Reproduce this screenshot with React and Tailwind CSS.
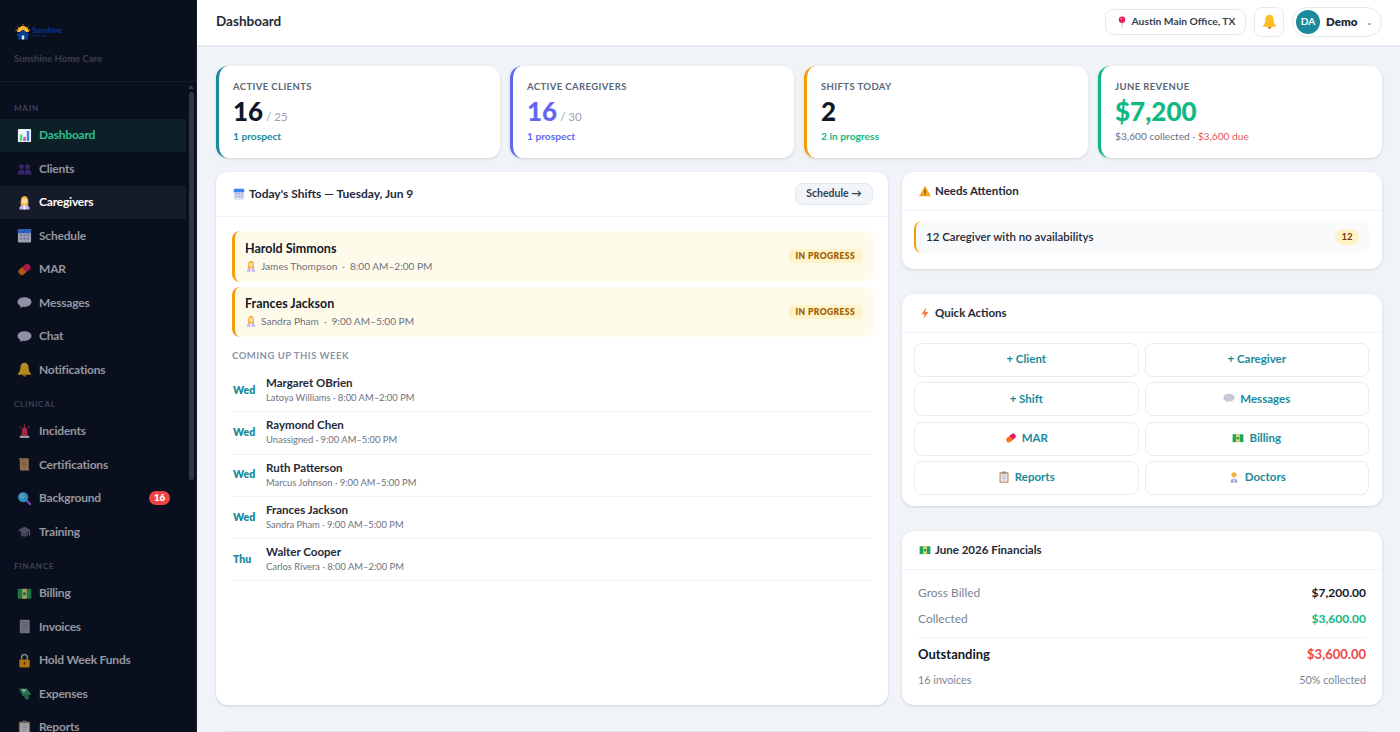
import React from "react";

const I = ({ children, className = "w-3.5 h-3.5" }) => (
  <svg viewBox="0 0 16 16" className={`${className} shrink-0`}>{children}</svg>
);

const Chart = (p) => (
  <I {...p}>
    <rect x="1" y="1" width="14" height="14" rx="1" fill="#f1f5f9" />
    <rect x="3" y="7" width="2.6" height="7" fill="#4ade80" />
    <rect x="6.7" y="9.5" width="2.6" height="4.5" fill="#ec4899" />
    <rect x="10.4" y="3" width="2.6" height="11" fill="#3b82f6" />
  </I>
);
const Users = (p) => (
  <I {...p}>
    <g fill="#46308a">
      <circle cx="4.8" cy="6" r="2.6" />
      <circle cx="11.200" cy="6" r="2.600" />
      <path d="M.5 14.500c0-3.500 1.500-5.500 4.300-5.500s3 2 3 5.500zM8.200 14.500c0-3.500 .2-5.500 3-5.500s4.300 2 4.300 5.500z" />
    </g>
  </I>
);
const Person = (p) => (
  <I {...p}>
    <path d="M2.500 15.500c0-3.800 2-5.500 5.500-5.500s5.500 1.700 5.500 5.500z" fill="#c4b5fd" />
    <path d="M4 10.500c-.5-5.500 .5-9.500 4-9.500s4.500 4 4 9.500l-2 1H6z" fill="#f5b342" />
    <circle cx="8" cy="6.500" r="2.800" fill="#fcd9a8" />
    <rect x="7" y="11" width="2" height="4.500" fill="#f1f5f9" />
  </I>
);
const Calendar = (p) => (
  <I {...p}>
    <rect x="1" y="1" width="14" height="14.500" rx="1.500" fill="#dcdff2" />
    <path d="M1 5.500V2.500A1.500 1.500 0 0 1 2.500 1h11A1.500 1.500 0 0 1 15 2.500v3z" fill="#3b82f6" />
    <g fill="#9a9cc4">
      <rect x="3.200" y="7" width="2.200" height="1.800" />
      <rect x="6.900" y="7" width="2.200" height="1.800" />
      <rect x="10.600" y="7" width="2.200" height="1.800" />
      <rect x="3.200" y="10.500" width="2.200" height="1.800" />
      <rect x="6.900" y="10.500" width="2.200" height="1.800" />
      <rect x="10.600" y="10.500" width="2.200" height="1.800" />
    </g>
  </I>
);
const Pill = (p) => (
  <I {...p}>
    <g transform="rotate(-40 8 8)">
      <path d="M8 4.400H4.400a3.600 3.600 0 0 0 0 7.200H8z" fill="#f97316" />
      <path d="M8 4.400h3.600a3.600 3.600 0 0 1 0 7.200H8z" fill="#ec1c5b" />
    </g>
  </I>
);
const Bubble = ({ fill = "#c9c6dc", ...p }) => (
  <I {...p}>
    <ellipse cx="8" cy="7.500" rx="7.500" ry="5.200" fill={fill} />
    <path d="M4 10.500l-.5 3.500 4-2.500z" fill={fill} />
  </I>
);
const Bell = (p) => (
  <I {...p}>
    <path d="M8 .8c-3 0-4.500 2.700-4.500 5.700 0 3.200-1.200 5-2.500 6v1.200h14v-1.200c-1.300-1-2.500-2.800-2.500-6C12.500 3.500 11 .8 8 .8z" fill="#fbbf24" />
    <path d="M6 13.700a2 2 0 0 0 4 0z" fill="#d97706" />
  </I>
);
const Siren = (p) => (
  <I {...p}>
    <path d="M4.500 12.500l1-6.500a2.500 2.500 0 0 1 5 0l1 6.500z" fill="#ef2d56" />
    <rect x="3" y="12.500" width="10" height="2.500" rx=".5" fill="#d8d4e8" />
    <path d="M8 .5v2.500M2.800 2.500l1.700 2M13.200 2.500l-1.700 2" stroke="#ef4444" strokeWidth="1" />
  </I>
);
const Scroll = (p) => (
  <I {...p}>
    <path d="M3 1.500h9.500v11a2 2 0 0 0 2 2H5a2 2 0 0 1-2-2z" fill="#c79a66" />
    <rect x="2" y="1" width="10" height="2" rx="1" fill="#a9794a" />
    <path d="M5 5.500h5M5 7.500h5M5 9.500h5" stroke="#8d6238" strokeWidth=".7" />
  </I>
);
const Search = (p) => (
  <I {...p}>
    <path d="M9.500 9.500l4.500 4.500" stroke="#a855f7" strokeWidth="2.400" strokeLinecap="round" />
    <circle cx="6.500" cy="6.500" r="5.500" fill="#38bdf8" />
    <circle cx="5.500" cy="5.500" r="2.800" fill="#7dd3fc" />
  </I>
);
const Cap = (p) => (
  <I {...p}>
    <path d="M4 8v4c1 2 7 2 8 0V8z" fill="#5a5570" />
    <path d="M8 3l7 3.500L8 10 1 6.500z" fill="#6b6580" />
    <path d="M13.500 7.500v5" stroke="#b08a4a" strokeWidth="1" />
  </I>
);
const Money = (p) => (
  <I {...p}>
    <rect x=".8" y="3" width="14.400" height="10.500" fill="#22a55b" />
    <rect x="5.500" y="3" width="5" height="10.500" fill="#e4d77a" />
    <circle cx="8" cy="8.200" r="1.800" fill="#22a55b" />
  </I>
);
const Ledger = (p) => (
  <I {...p}>
    <rect x="3" y=".8" width="10.500" height="14.400" rx=".8" fill="#9a9aa8" />
    <path d="M5 4h6.500M5 6.500h6.500M5 9h6.500M5 11.500h6.500" stroke="#6b6b78" strokeWidth=".8" />
  </I>
);
const Lock = (p) => (
  <I {...p}>
    <path d="M5 7V4.500a3 3 0 0 1 6 0V7" fill="none" stroke="#b8b8c4" strokeWidth="1.600" />
    <rect x="2.500" y="7" width="11" height="8.500" rx="1" fill="#f59e0b" />
    <rect x="7.200" y="9.500" width="1.600" height="3" fill="#78350f" />
  </I>
);
const Wings = (p) => (
  <I {...p}>
    <path d="M1 5l8-3 6 5-8 4z" fill="#2fa35e" transform="rotate(18 8 8)" />
    <path d="M5 3l5 1-3 3z" fill="#e5e7eb" />
    <path d="M7 11l5-3 1 5-3 2z" fill="#2f7d50" />
  </I>
);
const Clipboard = (p) => (
  <I {...p}>
    <rect x="2" y="1.800" width="12" height="13.800" rx="1" fill="#c08a5a" />
    <rect x="3.500" y="3.500" width="9" height="10.800" fill="#eceaf2" />
    <rect x="5.500" y=".8" width="5" height="2.700" rx=".5" fill="#8d8a9a" />
    <path d="M5.500 6h5M5.500 8h5M5.500 10h5M5.500 12h3" stroke="#9a97a8" strokeWidth=".7" />
  </I>
);
const Warn = (p) => (
  <I {...p}>
    <path d="M8 1L16 15H0z" fill="#f5a623" />
    <rect x="7.300" y="6" width="1.400" height="5" fill="#5b3a0a" />
    <rect x="7.300" y="12" width="1.400" height="1.400" fill="#5b3a0a" />
  </I>
);
const Bolt = (p) => (
  <I {...p}>
    <path d="M9.500.5L3.500 9.500h4L6 15.800 12.500 6.500h-4z" fill="#f97343" />
  </I>
);
const PinIcon = (p) => (
  <I {...p}>
    <path d="M8 9v6.500" stroke="#9ca3af" strokeWidth="1" />
    <circle cx="8" cy="5" r="4.300" fill="#ec1c5b" />
    <circle cx="6.800" cy="3.800" r="1.100" fill="#f9a8c0" />
  </I>
);
const Doc = (p) => (
  <I {...p}>
    <path d="M3.500 15.500c0-3.800 1.800-5.500 4.500-5.500s4.500 1.700 4.500 5.500z" fill="#a5a1d6" />
    <circle cx="8" cy="5" r="3.500" fill="#f5b342" />
    <rect x="7.200" y="10" width="1.600" height="5.500" fill="#eef" />
  </I>
);

const sections = [
  {
    label: "MAIN",
    items: [
      ["Dashboard", Chart, "active"],
      ["Clients", Users],
      ["Caregivers", Person, "hover"],
      ["Schedule", Calendar],
      ["MAR", Pill],
      ["Messages", Bubble],
      ["Chat", Bubble],
      ["Notifications", Bell],
    ],
  },
  {
    label: "CLINICAL",
    items: [
      ["Incidents", Siren],
      ["Certifications", Scroll],
      ["Background", Search, null, "16"],
      ["Training", Cap],
    ],
  },
  {
    label: "FINANCE",
    items: [
      ["Billing", Money],
      ["Invoices", Ledger],
      ["Hold Week Funds", Lock],
      ["Expenses", Wings],
      ["Reports", Clipboard],
    ],
  },
];

function NavItem({ label, Icon, state, badge }) {
  const tone =
    state === "active"
      ? "bg-[#0d2027] text-[#2fc191]"
      : state === "hover"
        ? "bg-[#161b2a] text-white"
        : "text-[#94979f]";
  const fade = state ? "" : "opacity-70";
  return (
    <div className={`flex h-[33.5px] items-center gap-[7px] pl-[17px] pr-4 text-[12px] font-bold tracking-[-0.2px] ${tone}`}>
      <span className={fade}>
        <Icon className="block w-[15px] h-[15px]" />
      </span>
      <span className="flex-1">{label}</span>
      {badge && (
        <span className="rounded-full bg-[#ef4444] px-[5px] py-px text-[9.5px] font-extrabold leading-[12px] tracking-normal text-white">
          {badge}
        </span>
      )}
    </div>
  );
}

function Sidebar() {
  return (
    <aside className="flex h-[732px] w-[197px] shrink-0 flex-col overflow-hidden border-r border-[#1a1d28] bg-[#0a0f1e]">
      <div className="h-[82px] shrink-0 border-b border-[#151a29] pl-[15px] pt-[24px]">
        <div className="flex h-[16px] items-center">
          <svg viewBox="0 0 16 16" className="h-[16px] w-[16px] shrink-0">
            <path d="M2 8a6 6 0 0 1 12 0z" fill="#fbb62c" />
            <path d="M8 .2v1.500M2.500 2.500l1 1M13.500 2.500l-1 1M.5 6h1.300M14.200 6h1.300" stroke="#fbb62c" strokeWidth=".8" />
            <path d="M8 5.500L1.500 10.500v1H3V15.500h10v-4h1.500v-1z" fill="#0a3d8f" />
            <rect x="6.800" y="11.500" width="2.400" height="4" fill="#e6eefc" />
          </svg>
          <div className="ml-px flex flex-col">
            <span className="text-[7.500px] font-bold leading-[7px] text-[#0b3a86]">Sunshine</span>
            <span className="text-[3px] leading-[4px] text-[#0b3a86]">Home Care</span>
          </div>
        </div>
        <p className="-ml-px mt-[12px] text-[9.5px] font-bold leading-[14px] text-[#3a3f4d]">Sunshine Home Care</p>
      </div>
      <div className="flex min-h-0 flex-1">
        <nav className="min-w-0 flex-1 overflow-hidden pt-[18px]">
          {sections.map((s, i) => (
            <div key={s.label} className={i ? "mt-[9.500px]" : ""}>
              <div className="flex h-[16px] items-center pl-[14px] text-[8px] font-bold tracking-[0.8px] text-[#3f4452]">
                {s.label}
              </div>
              <div className="mt-[2.500px]">
                {s.items.map(([label, Icon, state, badge]) => (
                  <NavItem key={label} label={label} Icon={Icon} state={state} badge={badge} />
                ))}
              </div>
            </div>
          ))}
        </nav>
        <div className="flex w-[10px] shrink-0 flex-col items-center pt-[3px]">
          <div className="h-0 w-0 border-x-[3px] border-b-[4px] border-x-transparent border-b-[#3a3d48]" />
          <div className="mt-[3px] h-[388px] w-[5px] rounded-full bg-[#33363f]" />
        </div>
      </div>
    </aside>
  );
}

function TopBar() {
  return (
    <header className="flex h-[47px] shrink-0 items-center justify-between border-b-2 border-[#e6eaf0] bg-white pb-[2px] pl-[19px] pr-[18px]">
      <h1 className="text-[13.5px] font-bold text-[#1f2937]">Dashboard</h1>
      <div className="flex items-center gap-[8px]">
        <div className="flex h-[26px] w-[141px] items-center justify-center gap-[4px] rounded-lg border border-[#e5e9f0] text-[10.300px] font-bold text-[#374151]">
          <PinIcon className="w-3 h-3" />
          Austin Main Office, TX
        </div>
        <div className="flex h-[30px] w-[30px] items-center justify-center rounded-lg border border-[#e5e9f0]">
          <Bell className="w-[15px] h-[15px]" />
        </div>
        <div className="flex h-[30px] w-[90px] items-center rounded-full border border-[#e5e9f0] pl-[3px]">
          <span className="flex h-[24px] w-[24px] items-center justify-center rounded-full bg-[#1a8a9a] text-[10px] font-bold text-white">
            DA
          </span>
          <span className="ml-[6px] text-[11.5px] font-extrabold text-[#1f2937]">Demo</span>
          <span className="ml-[9px] text-[8px] leading-[8px] text-[#6b7280]">⌄</span>
        </div>
      </div>
    </header>
  );
}

function Stat({ label, border, children, foot }) {
  return (
    <div className={`h-[92px] rounded-xl border-l-[3px] bg-white pl-[14px] pt-[15px] shadow-[0_1px_3px_rgba(15,23,42,0.14)] ${border}`}>
      <div className="text-[9.5px] font-bold leading-[12px] tracking-[0.4px] text-[#5b6778]">{label}</div>
      <div className="mt-[4px] flex h-[29px] items-baseline">{children}</div>
      <div className="mt-[3px] text-[10.2px] font-bold leading-[14px]">{foot}</div>
    </div>
  );
}

function Card({ className = "", children }) {
  return (
    <section className={`rounded-xl bg-white shadow-[0_1px_3px_rgba(15,23,42,0.14)] ${className}`}>{children}</section>
  );
}

function CardHead({ Icon, title, gap = "gap-[4px]" }) {
  return (
    <div className={`flex h-[39px] items-center border-b border-[#f1f3f7] pl-[17px] text-[11.5px] font-bold text-[#1f2937] ${gap}`}>
      <Icon className="w-3 h-3" />
      {title}
    </div>
  );
}

function ActiveShift({ name, who, time }) {
  return (
    <div className="flex h-[50.5px] items-center justify-between rounded-lg border-l-[3px] border-[#f59e0b] bg-[#fffbeb] pl-[10px] pr-[10px]">
      <div className="mb-[0.500px]">
        <div className="text-[12.5px] font-bold leading-[17px] text-[#111827]">{name}</div>
        <div className="mt-[2px] flex items-center text-[10.1px] leading-[14px] text-[#6b7280]">
          <Person className="w-3 h-3" />
          <span className="ml-[4px]">{who}</span>
          <span className="mx-[5px]">·</span>
          <span>{time}</span>
        </div>
      </div>
      <span className="rounded-full bg-[#fef3c7] px-[8px] py-[1px] text-[8.5px] font-extrabold leading-[12px] tracking-[0.4px] text-[#a16207]">
        IN PROGRESS
      </span>
    </div>
  );
}

const upcoming = [
  ["Wed", "Margaret OBrien", "Latoya Williams · 8:00 AM–2:00 PM"],
  ["Wed", "Raymond Chen", "Unassigned · 9:00 AM–5:00 PM"],
  ["Wed", "Ruth Patterson", "Marcus Johnson · 9:00 AM–5:00 PM"],
  ["Wed", "Frances Jackson", "Sandra Pham · 9:00 AM–5:00 PM"],
  ["Thu", "Walter Cooper", "Carlos Rivera · 8:00 AM–2:00 PM"],
];

const actions = [
  ["+ Client"],
  ["+ Caregiver"],
  ["+ Shift"],
  ["Messages", Bubble],
  ["MAR", Pill],
  ["Billing", Money],
  ["Reports", Clipboard],
  ["Doctors", Doc],
];

export default function App() {
  return (
    <div className="flex h-[732px] w-[1400px] overflow-hidden bg-[#f0f4f8] font-['Lato','Noto_Sans',sans-serif]">
      <Sidebar />
      <main className="flex min-w-0 flex-1 flex-col overflow-hidden">
        <TopBar />
        <div className="pl-[19px] pr-[18px] pt-[19px]">
          <div className="grid grid-cols-4 gap-[10px]">
            <Stat
              label="ACTIVE CLIENTS"
              border="border-[#1a8a9a]"
              foot={<span className="text-[#1a8a9a]">1 prospect</span>}
            >
              <span className="text-[26px] font-black leading-[29px] text-[#0f172a]">16</span>
              <span className="ml-[3px] text-[11.5px] text-[#9ca3af]">/ 25</span>
            </Stat>
            <Stat
              label="ACTIVE CAREGIVERS"
              border="border-[#6366f1]"
              foot={<span className="text-[#6366f1]">1 prospect</span>}
            >
              <span className="text-[26px] font-black leading-[29px] text-[#6366f1]">16</span>
              <span className="ml-[3px] text-[11.5px] text-[#9ca3af]">/ 30</span>
            </Stat>
            <Stat
              label="SHIFTS TODAY"
              border="border-[#f59e0b]"
              foot={<span className="text-[#10b981]">2 in progress</span>}
            >
              <span className="text-[26px] font-black leading-[29px] text-[#0f172a]">2</span>
            </Stat>
            <Stat
              label="JUNE REVENUE"
              border="border-[#10b981]"
              foot={
                <span className="font-normal text-[#6b7280]">
                  $3,600 collected · <span className="text-[#dc5a5a]">$3,600 due</span>
                </span>
              }
            >
              <span className="text-[26px] font-black leading-[29px] text-[#10b981]">$7,200</span>
            </Stat>
          </div>

          <div className="mt-[14px] grid grid-cols-[672px_480px] gap-[14px]">
            <Card className="h-[533px]">
              <div className="flex h-[45px] items-center justify-between border-b border-[#f1f3f7] pl-[17px] pr-[15px]">
                <div className="flex items-center gap-[4px] text-[12px] font-bold text-[#1f2937]">
                  <Calendar className="w-3 h-3" />
                  Today's Shifts — Tuesday, Jun 9
                </div>
                <div className="flex h-[22px] w-[78px] items-center justify-center rounded-lg border border-[#e2e8f0] bg-[#f1f5f9] text-[10.5px] font-bold text-[#374151]">
                  Schedule →
                </div>
              </div>
              <div className="pl-[16px] pr-[15px] pt-[14px]">
                <div className="flex flex-col gap-[5px]">
                  <ActiveShift name="Harold Simmons" who="James Thompson" time="8:00 AM–2:00 PM" />
                  <ActiveShift name="Frances Jackson" who="Sandra Pham" time="9:00 AM–5:00 PM" />
                </div>
                <div className="mt-[13px] text-[9.5px] font-bold leading-[12px] tracking-[0.5px] text-[#8a94a6]">
                  COMING UP THIS WEEK
                </div>
                <div className="mt-[8px]">
                  {upcoming.map(([d, n, s]) => (
                    <div key={n + d} className="flex h-[42.3px] items-center border-b border-[#f1f3f7] pl-px">
                      <span className="w-[33px] text-[10.5px] font-extrabold text-[#1a8a9a]">{d}</span>
                      <div className="mb-[2px]">
                        <div className="text-[11.5px] font-bold leading-[15px] text-[#1f2937]">{n}</div>
                        <div className="mt-[1px] text-[9.4px] leading-[13px] text-[#6b7280]">{s}</div>
                      </div>
                    </div>
                  ))}
                </div>
              </div>
            </Card>

            <div className="flex flex-col">
              <Card className="h-[97px]">
                <CardHead Icon={Warn} title="Needs Attention" />
                <div className="ml-[12px] mr-[13px] mt-[10px] flex h-[32px] items-center justify-between rounded-lg border-l-[2px] border-[#f59e0b] bg-[#f8fafc] pl-[10px] pr-[10px]">
                  <span className="text-[11.5px] font-semibold text-[#1f2937]">12 Caregiver with no availabilitys</span>
                  <span className="flex h-[16px] w-[24px] items-center justify-center rounded-full bg-[#fef3c7] text-[9.5px] font-bold text-[#78350f]">
                    12
                  </span>
                </div>
              </Card>

              <Card className="mt-[25px] h-[212px]">
                <CardHead Icon={Bolt} title="Quick Actions" gap="gap-[4px]" />
                <div className="ml-[12px] mr-[13px] mt-[10px] grid grid-cols-2 gap-x-[6px] gap-y-[5.300px]">
                  {actions.map(([label, Icon]) => (
                    <div
                      key={label}
                      className="flex h-[34px] items-center justify-center gap-[5px] rounded-lg border border-[#e8ecf2] pb-[2px] text-[11.5px] font-bold text-[#1a8a9a]"
                    >
                      {Icon && <Icon className="w-3 h-3" />}
                      {label}
                    </div>
                  ))}
                </div>
              </Card>

              <Card className="mt-[25px] h-[174px]">
                <CardHead Icon={Money} title="June 2026 Financials" />
                <div className="px-[16px] text-[12px]">
                  <div className="mt-[10px] flex h-[26px] items-center justify-between">
                    <span className="text-[#7b8494]">Gross Billed</span>
                    <span className="font-bold text-[#111827]">$7,200.00</span>
                  </div>
                  <div className="flex h-[26px] items-center justify-between">
                    <span className="text-[#7b8494]">Collected</span>
                    <span className="font-bold text-[#10b981]">$3,600.00</span>
                  </div>
                  <div className="mt-[5px] flex h-[35px] items-center justify-between border-t border-[#f1f3f7]">
                    <span className="text-[13px] font-bold text-[#111827]">Outstanding</span>
                    <span className="text-[13px] font-bold text-[#ef4444]">$3,600.00</span>
                  </div>
                  <div className="flex h-[16px] items-center justify-between text-[10.8px] text-[#7b8494]">
                    <span>16 invoices</span>
                    <span>50% collected</span>
                  </div>
                </div>
              </Card>
            </div>
          </div>
          <div className="mt-[26px] h-[12px] rounded-t-xl border-t border-[#e2e8f0]" />
        </div>
      </main>
    </div>
  );
}
